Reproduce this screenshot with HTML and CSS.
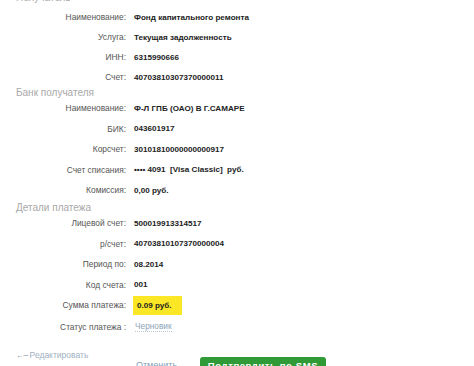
FILE: index.html
```html
<!DOCTYPE html>
<html>
<head>
<meta charset="utf-8">
<link rel="stylesheet" href="styles.css">
</head>
<body>
<div class="page">
  <div class="title t1">Получатель</div>
  <div class="sec s1">
    <div class="row"><span class="lbl">Наименование:</span><span class="val">Фонд капитального ремонта</span></div>
    <div class="row"><span class="lbl">Услуга:</span><span class="val">Текущая задолженность</span></div>
    <div class="row"><span class="lbl">ИНН:</span><span class="val">6315990666</span></div>
    <div class="row"><span class="lbl">Счет:</span><span class="val">40703810307370000011</span></div>
  </div>
  <div class="title t2">Банк получателя</div>
  <div class="sec s2">
    <div class="row"><span class="lbl">Наименование:</span><span class="val">Ф-Л ГПБ (ОАО) В Г.САМАРЕ</span></div>
    <div class="row"><span class="lbl">БИК:</span><span class="val">043601917</span></div>
    <div class="row"><span class="lbl">Корсчет:</span><span class="val">30101810000000000917</span></div>
    <div class="row"><span class="lbl">Счет списания:</span><span class="val">•••• 4091&nbsp; [Visa Classic]&nbsp; руб.</span></div>
    <div class="row"><span class="lbl">Комиссия:</span><span class="val">0,00 руб.</span></div>
  </div>
  <div class="title t3">Детали платежа</div>
  <div class="sec s3">
    <div class="row"><span class="lbl">Лицевой счет:</span><span class="val">500019913314517</span></div>
    <div class="row"><span class="lbl">р/счет:</span><span class="val">40703810107370000004</span></div>
    <div class="row"><span class="lbl">Период по:</span><span class="val">08.2014</span></div>
    <div class="row"><span class="lbl">Код счета:</span><span class="val">001</span></div>
    <div class="row"><span class="lbl">Сумма платежа:</span><span class="val hl">0.09 руб.</span></div>
    <div class="row status"><span class="lbl">Статус платежа :</span><span class="draft">Черновик</span></div>
  </div>
  <div class="edit"><span class="arrow">←–</span> Редактировать</div>
  <div class="actions">
    <span class="cancel">Отменить</span>
    <span class="btn">Подтвердить по SMS</span>
  </div>
</div>
</body>
</html>
```
FILE: styles.css
```css
html, body {
  margin: 0;
  padding: 0;
  background: #fff;
  overflow: hidden;
}
body {
  font-family: "Liberation Sans", Arial, sans-serif;
  width: 474px;
  height: 366px;
}
.page {
  margin-top: -10px;
}
.title {
  font-size: 10px;
  color: #a9a9a9;
  padding-left: 16px;
  height: 12px;
  line-height: 12px;
}
.t1 {
  height: 16px;
  line-height: 16px;
  margin-bottom: 1px;
}
.t2 {
  margin-bottom: -1px;
}
.t3 {
  margin-top: 1.5px;
  margin-bottom: -1.25px;
}
.row {
  display: flex;
  align-items: center;
  height: 20.5px;
}
.s1 .row {
  height: 20px;
}
.lbl {
  width: 126px;
  text-align: right;
  font-size: 8.4px;
  color: #555;
  flex: none;
}
.val {
  margin-left: 8px;
  font-size: 8.1px;
  font-weight: bold;
  color: #222;
  white-space: nowrap;
}
.hl {
  background: #fbe725;
  margin-left: 7px;
  padding: 0 4px;
  height: 19px;
  line-height: 19px;
  width: 41px;
}
.status {
  margin-top: 1px;
}
.draft {
  margin-left: 9px;
  font-size: 8.3px;
  color: #8da3b7;
  border-bottom: 1px dotted #b8c6d2;
  line-height: 10px;
}
.edit {
  margin-top: 12px;
  padding-left: 16px;
  font-size: 8.5px;
  color: #9fb0bf;
  height: 12px;
  line-height: 12px;
}
.arrow {
  color: #8b9aa8;
  letter-spacing: -1px;
}
.actions {
  display: flex;
  align-items: flex-start;
  margin-top: -4px;
  padding-left: 136px;
}
.cancel {
  font-size: 9px;
  color: #7f9fba;
  margin-top: 3px;
  width: 64px;
}
.btn {
  background: #2f9a36;
  color: #fff;
  font-weight: bold;
  font-size: 9.5px;
  width: 126px;
  height: 24px;
  padding-top: 2px;
  line-height: 14px;
  box-sizing: border-box;
  text-align: center;
  border-radius: 3px;
  letter-spacing: 0.6px;
}
```
